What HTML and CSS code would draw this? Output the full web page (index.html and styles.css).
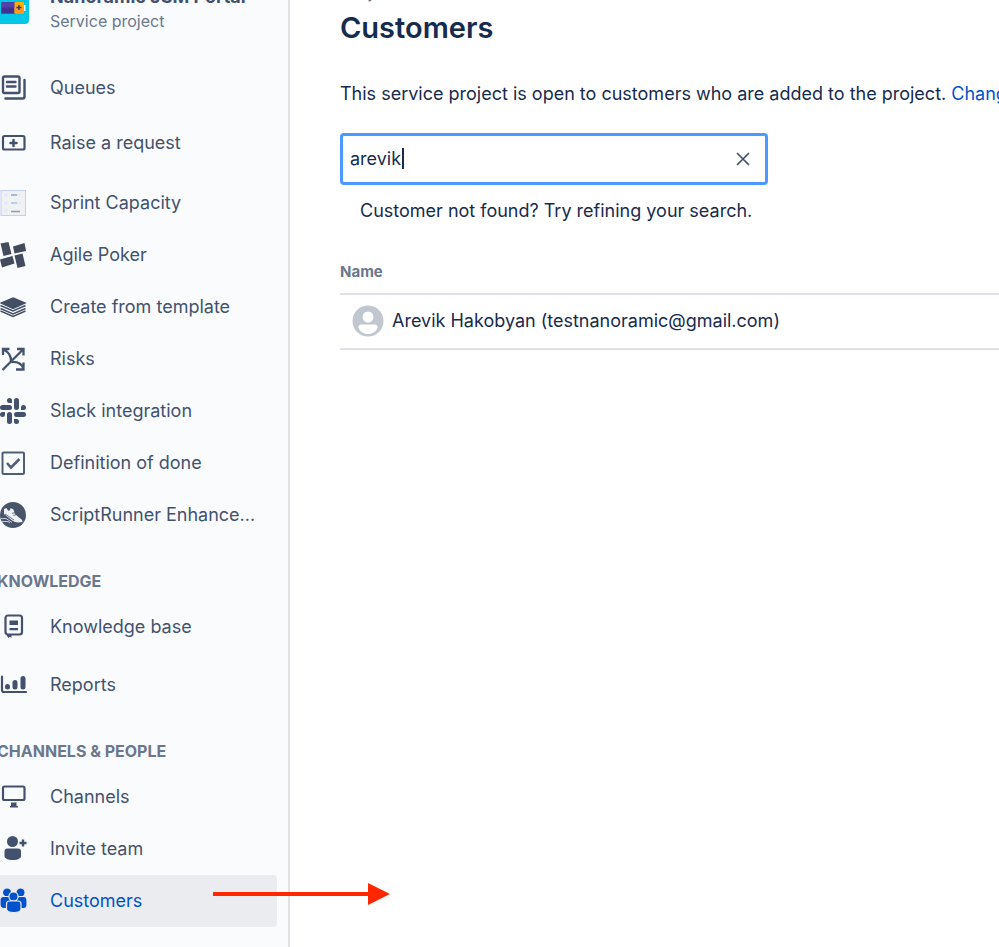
FILE: index.html
```html
<!DOCTYPE html>
<html lang="en">
<head>
  <meta charset="UTF-8">
  <meta name="viewport" content="width=device-width, initial-scale=1.0">
  <title>Customers</title>
  <link rel="stylesheet" href="styles.css">
</head>
<body>

  <div class="page">
    <nav class="sidebar">
      <div class="project">
        <svg class="project-logo" width="48" height="48" viewBox="0 0 48 48">
          <rect width="48" height="48" rx="4" fill="#00c7e6"/>
          <rect x="20" y="26" width="15" height="11.500" rx="1" fill="#5243aa"/>
          <rect x="20" y="31.500" width="15" height="6" fill="#403294"/>
          <rect x="42" y="29" width="2.500" height="6" fill="#f4f5f7"/>
          <rect x="33.500" y="26" width="9.500" height="11.500" rx="1" fill="#ffab00"/>
          <path d="M33.500 31.500H43v6h-9.500z" fill="#ff991f"/>
          <path d="M38 29v5M35.500 31.500h5" stroke="#403294" stroke-width="1.500"/>
        </svg>
        <div class="project-text">
          <strong class="project-name">Nanoramic JSM Portal</strong>
          <span class="project-type">Service project</span>
        </div>
      </div>

      <ul class="menu menu-main">
        <li><a href="#" class="menu-item">
          <svg class="icon" viewBox="0 0 28 28" fill="none" stroke="#42526e" stroke-width="2.400" stroke-linecap="round">
            <rect x="4" y="2.500" width="16.500" height="16.500" rx="1.500"/>
            <path d="M8 8h8.500M8 12.500h8.500M25.500 6v16.500a2 2 0 0 1-2 2H6.500"/>
          </svg>
          Queues</a></li>
        <li><a href="#" class="menu-item">
          <svg class="icon" viewBox="0 0 28 28" fill="none" stroke="#42526e" stroke-width="2.200">
            <rect x="4" y="7" width="21.500" height="13.500" rx="1.500"/>
            <path d="M14.500 11v6M11.500 14h6" stroke-width="2.500" stroke-linecap="round"/>
          </svg>
          Raise a request</a></li>
      </ul>

      <ul class="menu menu-apps">
        <li><a href="#" class="menu-item">
          <svg class="icon" viewBox="0 0 28 28" fill="none">
            <rect x="2" y="1.500" width="24.500" height="25" fill="#f0f1f3" stroke="#c3d0f3"/>
            <path d="M5 4.500l4 3M9 4l-4 4M5 12.500l4 3M9 12l-4 4M5 20l4 3M9 19.500l-4 4" stroke="#dfe5fa"/>
            <path d="M12 6h6" stroke="#8fa5d0" stroke-width="1.500"/>
            <path d="M12 14h6" stroke="#a3c3f4" stroke-width="1.500"/>
            <path d="M12 22.500h9" stroke="#8d9bb5" stroke-width="1.500"/>
            <path d="M18 6h4M18 14h4" stroke="#dde5fb"/>
          </svg>
          Sprint Capacity</a></li>
        <li><a href="#" class="menu-item">
          <svg class="icon" viewBox="0 0 28 28" fill="#414b5c">
            <path d="M1.500 2.500L9.500 1l3 12-8 2zM14 5.500l11.500-3.500 1.500 8L15.500 12.500zM1 18.500l12.500-3.500 2 7.500L3 26.500zM15.500 14.500l8-2 3 12.500-8 2z"/>
          </svg>
          Agile Poker</a></li>
        <li><a href="#" class="menu-item">
          <svg class="icon" viewBox="0 0 28 28" fill="none" stroke="#424f64" stroke-width="1.400">
            <path d="M14 5l12 5-12 5.500L2 10z" fill="#424f64"/>
            <path d="M1.500 12.500L14 18l12.500-5.500M1.500 15.500L14 21l12.500-5.500M1.500 18L14 23.500 26.500 18"/>
          </svg>
          Create from template</a></li>
        <li><a href="#" class="menu-item">
          <svg class="icon" viewBox="0 0 28 28" fill="none" stroke="#44546f" stroke-width="2.300">
            <path d="M4 10V4h6.500M18 4h6.500v6.500M24.500 17.500v7H17M3.500 25L24.500 4M4.500 4.500c6 3 8 7 7.500 12.500M24.500 23.500c-2-5-6-7-12-6.500"/>
          </svg>
          Risks</a></li>
        <li><a href="#" class="menu-item">
          <svg class="icon" viewBox="0 0 28 28" fill="none" stroke="#42526e" stroke-width="5" stroke-linecap="round">
            <path d="M17.500 3.500v7M3.500 10.500h7M10.500 17.500v7M17.500 17.500h7"/>
            <path d="M10.500 1a2.500 2.500 0 0 0 0 5H13V3.500A2.500 2.500 0 0 0 10.500 1zM27 10.500a2.500 2.500 0 0 0-5 0V13h2.500a2.500 2.500 0 0 0 2.500-2.500zM17.500 27a2.500 2.500 0 0 0 0-5H15v2.500a2.500 2.500 0 0 0 2.500 2.500zM1 17.500a2.500 2.500 0 0 0 5 0V15H3.500A2.500 2.500 0 0 0 1 17.500z" fill="#42526e" stroke="none"/>
          </svg>
          Slack integration</a></li>
        <li><a href="#" class="menu-item">
          <svg class="icon" viewBox="0 0 28 28" fill="none" stroke="#505f79" stroke-width="2">
            <rect x="3.500" y="3.500" width="21.500" height="21.500" rx="1"/>
            <path d="M8 14l4 4.500 8.500-8.500" stroke-width="2.600"/>
          </svg>
          Definition of done</a></li>
        <li><a href="#" class="menu-item">
          <svg class="icon" viewBox="0 0 28 28">
            <circle cx="14" cy="14" r="13" fill="#48546a"/>
            <path d="M5 8l2.500-1 1.500 2.500c1.500.5 2.500-.5 2.500-2.500l3 1.500 1.500 4.500 4.500 4c2 1 3 2 3 4l-4 .5c-3 0-5-1-7-2.500L5 13z" fill="#eef0f3"/>
            <path d="M2 17.500h5l6 4M3 20.500h6l2 1.500" fill="none" stroke="#c3c9d3"/>
            <path d="M13 12.500l3-1M14.500 14.500l3-1M6 13l9 6" stroke="#48546a" stroke-width=".8"/>
          </svg>
          <span class="menu-label">ScriptRunner Enhance...</span></a></li>
      </ul>

      <h2 class="menu-heading">KNOWLEDGE</h2>
      <ul class="menu menu-knowledge">
        <li><a href="#" class="menu-item">
          <svg class="icon" viewBox="0 0 28 28" fill="none" stroke="#42526e" stroke-width="2.200">
            <rect x="6.500" y="2.500" width="16.500" height="19" rx="2.500"/>
            <path d="M10.500 7.500h8.500v4.500h-8.500zM10.500 15h8.500v2.200h-8.500zM8 21h4.500v4l-1.500-1.200-1.500 1.200L8 23z" fill="#42526e" stroke="none"/>
          </svg>
          Knowledge base</a></li>
        <li><a href="#" class="menu-item">
          <svg class="icon" viewBox="0 0 28 28" fill="none" stroke="#42526e" stroke-linecap="round">
            <path d="M3 5.500V19a2 2 0 0 0 2 2h22" stroke-width="2.200"/>
            <path d="M8.500 15.500v.5M16 11.500V16M24 7.500V16" stroke-width="5"/>
          </svg>
          Reports</a></li>
      </ul>

      <h2 class="menu-heading">CHANNELS &amp; PEOPLE</h2>
      <ul class="menu">
        <li><a href="#" class="menu-item">
          <svg class="icon" viewBox="0 0 28 28" fill="none" stroke="#42526e" stroke-width="2.200">
            <rect x="4" y="3.500" width="21.500" height="13.500" rx="1.500"/>
            <path d="M12 19.500h5.500V23H19v1.500h-8V23h1z" fill="#42526e" stroke="none"/>
          </svg>
          Channels</a></li>
        <li><a href="#" class="menu-item">
          <svg class="icon" viewBox="0 0 28 28" fill="#42526e">
            <circle cx="13.500" cy="6.500" r="5.500"/>
            <path d="M5.500 16.500a3 3 0 0 1 3-3h10.500a3 3 0 0 1 3 3v4.500c0 2.500-3.500 4-8.250 4s-8.250-1.500-8.250-4z"/>
            <path d="M24 4.500v7M20.500 8h7" stroke="#42526e" stroke-width="2.400"/>
          </svg>
          Invite team</a></li>
        <li><a href="#" class="menu-item active">
          <svg class="icon" viewBox="0 0 28 28" fill="#0052cc" stroke="#ebecf0" stroke-width="1.200">
            <circle cx="8" cy="5.500" r="4.600"/>
            <circle cx="21.500" cy="5.500" r="4.600"/>
            <rect x="1" y="9.500" width="11" height="12" rx="3.500"/>
            <rect x="17" y="9.500" width="11" height="12" rx="3.500"/>
            <circle cx="14.500" cy="9.500" r="4.600"/>
            <path d="M7.500 17a3 3 0 0 1 3-3H19a3 3 0 0 1 3 3v5c0 2-3 3.500-7.250 3.500S7.500 24 7.500 22z"/>
          </svg>
          Customers</a></li>
      </ul>
    </nav>

    <main class="content">
      <div class="breadcrumb"><a href="#">Projects</a><span>/</span></div>
      <h1>Customers</h1>
      <p class="intro">This service project is open to customers who are added to the project. <a href="#">Change</a></p>

      <div class="search">
        <input type="text" class="search-input" value="arevik" aria-label="Search customers">
        <span class="caret"></span>
        <button type="button" class="clear-btn" aria-label="Clear search">
          <svg width="14" height="14" viewBox="0 0 14 14" fill="none" stroke="#42526e" stroke-width="1.700" stroke-linecap="round">
            <path d="M1.500 1.500l11 11M12.500 1.500l-11 11"/>
          </svg>
        </button>
      </div>
      <p class="hint">Customer not found? Try refining your search.</p>

      <table class="customers">
        <thead>
          <tr><th>Name</th></tr>
        </thead>
        <tbody>
          <tr>
            <td>
              <div class="customer">
                <svg width="32" height="32" viewBox="0 0 32 32">
                  <circle cx="16" cy="16" r="15.500" fill="#c1c7d0"/>
                  <circle cx="16" cy="12" r="5.500" fill="#fff"/>
                  <path d="M6.500 22.500a3 3 0 0 1 3-3h13a3 3 0 0 1 3 3c-1 4-5 6.500-9.500 6.500s-8.500-2.500-9.500-6.500z" fill="#fff"/>
                </svg>
                <span>Arevik Hakobyan (testnanoramic@gmail.com)</span>
              </div>
            </td>
          </tr>
        </tbody>
      </table>
    </main>

    <svg class="arrow" width="178" height="22" viewBox="0 0 178 22" fill="#ff2600">
      <path d="M0 9h155V0l22 11-22 11v-9H0z"/>
    </svg>
  </div>

</body>
</html>
```

FILE: styles.css
```css
* {
  box-sizing: border-box;
}
body {
  margin: 0;
  font-family: Inter, "Liberation Sans", sans-serif;
  font-size: 18px;
  line-height: 24px;
  color: #172b4d;
  background-color: #fff;
}
a {
  color: #0052cc;
  text-decoration: none;
}
.page {
  position: relative;
  display: flex;
  min-height: 100vh;
  overflow: hidden;
}

/* sidebar */
.sidebar {
  flex: 0 0 290px;
  padding-right: 11px;
  background-color: #fafbfd;
  border-right: 2px solid #e1e2e6;
}
.project {
  display: flex;
  align-items: flex-end;
  gap: 21px;
  height: 62px;
  margin-top: -26px;
  margin-left: -19px;
  white-space: nowrap;
}
.project-logo {
  flex: none;
  margin-bottom: 12px;
}
.project-text {
  display: flex;
  flex-direction: column;
  margin-bottom: 3px;
}
.project-name {
  font-weight: 700;
  color: #42526e;
}
.project-type {
  font-size: 16px;
  color: #6b778c;
}
.menu {
  display: flex;
  flex-direction: column;
  margin: 0;
  padding: 0;
  list-style: none;
}
.menu-main {
  gap: 3px;
  margin-top: 26px;
}
.menu-apps {
  margin-top: 8px;
}
.menu-knowledge {
  gap: 6px;
}
.menu-item {
  display: flex;
  align-items: center;
  gap: 23px;
  height: 52px;
  border-radius: 0 4px 4px 0;
  color: #42526e;
  white-space: nowrap;
}
.menu-item.active {
  background-color: #ebecf0;
  color: #0052cc;
}
.icon {
  flex: none;
  width: 28px;
  height: 28px;
  margin-left: -1px;
}
.menu-heading {
  margin: 30px 0 10px -3px;
  font-size: 16px;
  line-height: 20px;
  font-weight: 700;
  color: #6b778c;
}

/* content */
.content {
  flex: 1;
  min-width: 0;
  padding-left: 50px;
}
.breadcrumb {
  display: flex;
  gap: 14px;
  margin-top: -20px;
  color: #6b778c;
}
.breadcrumb a {
  color: #6b778c;
}
h1 {
  margin: 4px 0 0;
  font-size: 29px;
  line-height: 40px;
  font-weight: 600;
}
.intro {
  margin: 34px 0 27px;
  white-space: nowrap;
}
.search {
  position: relative;
  display: flex;
  align-items: center;
  width: 65%;
  max-width: 428px;
  height: 52px;
  padding: 0 15px 0 7px;
  border: 3px solid #4c9aff;
  border-radius: 4px;
}
.search-input {
  flex: 1;
  min-width: 0;
  padding: 0;
  border: none;
  outline: none;
  background: none;
  font: inherit;
  color: inherit;
}
.caret {
  position: absolute;
  top: 12px;
  left: 59px;
  width: 2px;
  height: 21px;
  background-color: #172b4d;
}
.clear-btn {
  display: flex;
  padding: 0;
  border: none;
  background: none;
  cursor: pointer;
}
.hint {
  margin: 14px 0 37px 20px;
}
.customers {
  width: 100%;
  border-collapse: collapse;
}
.customers th {
  padding: 0 0 9px;
  border-bottom: 2px solid #dfe1e6;
  font-size: 15px;
  font-weight: 700;
  text-align: left;
  color: #6b778c;
}
.customers td {
  padding: 10px 12px 11px;
  border-bottom: 2px solid #dfe1e6;
}
.customer {
  display: flex;
  align-items: center;
  gap: 8px;
}

/* pointer drawn over the page */
.arrow {
  position: absolute;
  top: 883px;
  left: 213px;
}
```
